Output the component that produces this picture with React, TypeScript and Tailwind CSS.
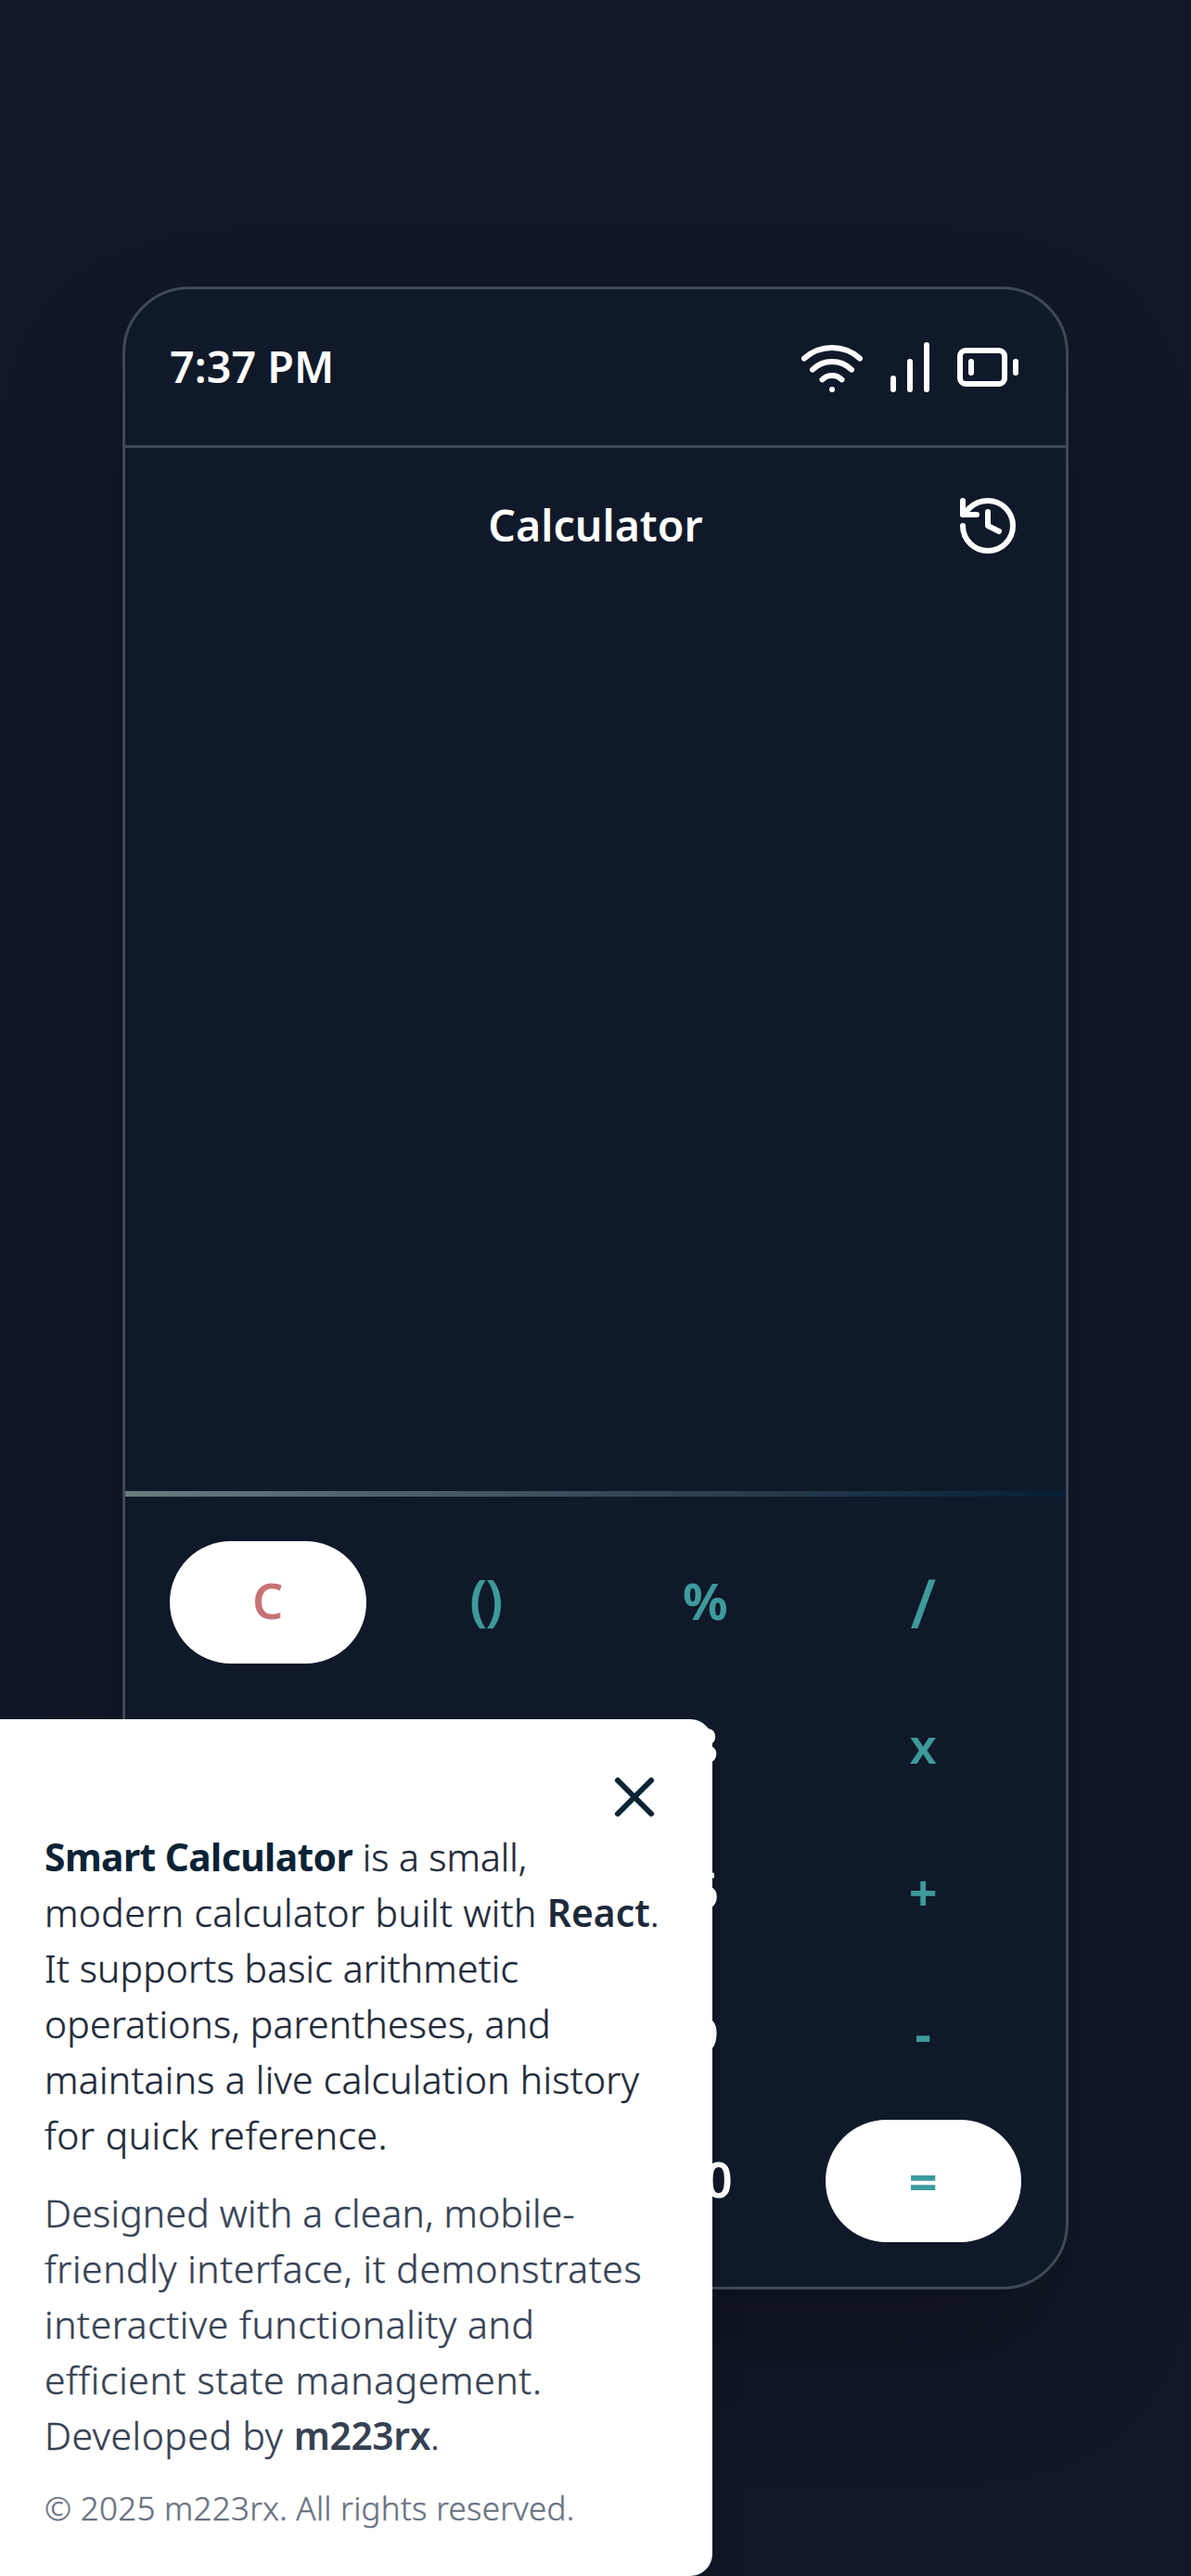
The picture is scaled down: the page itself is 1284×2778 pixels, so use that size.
import { BatteryLow, History, Wifi, X } from "lucide-react";

type Tone = "digit" | "operator" | "clear" | "equals";

const KEYS: { label: string; tone: Tone; glyph: string }[] = [
  { label: "C", tone: "clear", glyph: "pb-1 text-[52.4px] font-semibold" },
  { label: "()", tone: "operator", glyph: "pb-2 pr-0.5 text-[59px] leading-none font-semibold tracking-[-2px]" },
  { label: "%", tone: "operator", glyph: "pb-1 text-[54px] font-bold tracking-[-1px]" },
  { label: "/", tone: "operator", glyph: "pb-0 text-[72px] leading-none font-medium" },
  { label: "1", tone: "digit", glyph: "pb-1 text-[52.4px] font-semibold" },
  { label: "2", tone: "digit", glyph: "pb-1 text-[52.4px] font-semibold" },
  { label: "3", tone: "digit", glyph: "pb-1 text-[52.4px] font-semibold" },
  { label: "x", tone: "operator", glyph: "pb-1 text-[52.4px] font-semibold" },
  { label: "4", tone: "digit", glyph: "pb-1 text-[52.4px] font-semibold" },
  { label: "5", tone: "digit", glyph: "pb-1 text-[52.4px] font-semibold" },
  { label: "6", tone: "digit", glyph: "pb-1 text-[52.4px] font-semibold" },
  { label: "+", tone: "operator", glyph: "pb-0 text-[54px] font-bold" },
  { label: "7", tone: "digit", glyph: "pb-1 text-[52.4px] font-semibold" },
  { label: "8", tone: "digit", glyph: "pb-1 text-[52.4px] font-semibold" },
  { label: "9", tone: "digit", glyph: "pb-1 text-[52.4px] font-semibold" },
  { label: "-", tone: "operator", glyph: "pb-2 text-[54px] font-bold" },
  { label: ".", tone: "digit", glyph: "pb-1 text-[52.4px] font-semibold" },
  { label: "0", tone: "digit", glyph: "pb-1 text-[52.4px] font-semibold" },
  { label: "00", tone: "digit", glyph: "pb-1 text-[52.4px] font-semibold" },
  { label: "=", tone: "equals", glyph: "pb-0 text-[54px] font-bold" },
];

const TONES: Record<Tone, string> = {
  digit: "text-white",
  operator: "text-[#3d9a9c]",
  clear: "bg-white text-[#c87376]",
  equals: "bg-white text-[#3d9a9c]",
};

function SignalBars() {
  return (
    <svg className="size-[72px]" viewBox="0 0 24 24" fill="none" stroke="currentColor" strokeWidth="2" strokeLinecap="round">
      <path d="M6 20v-4M12 20V10M18 20V4" />
    </svg>
  );
}

function StatusBar() {
  return (
    <header className="flex items-center justify-between border-b-3 border-[#3f4954] p-12">
      <span className="-mt-0.5 text-[46.56px] leading-[70px] font-semibold tracking-[0.1px]">7:37 PM</span>
      <div className="flex gap-3">
        <Wifi className="size-[72px]" />
        <SignalBars />
        <BatteryLow className="size-[72px]" />
      </div>
    </header>
  );
}

function TitleBar() {
  return (
    <div className="grid grid-cols-[72px_1fr_72px] items-center px-12 pt-12">
      <span />
      <h1 className="-mt-0.5 text-center text-[46.56px] leading-[70px] font-semibold">Calculator</h1>
      <History className="size-[72px]" />
    </div>
  );
}

function Keypad() {
  return (
    <div className="grid grid-cols-4 gap-6 p-12">
      {KEYS.map((key) => (
        <button
          key={key.label}
          className={`flex h-[132px] items-center justify-center rounded-full ${key.glyph} ${TONES[key.tone]}`}
        >
          {key.label}
        </button>
      ))}
    </div>
  );
}

function AboutPanel() {
  return (
    <aside className="absolute bottom-0 left-0 h-[924px] w-[768px] rounded-r-[24px] bg-white p-12 text-[40.74px] leading-[60px] font-light whitespace-nowrap shadow-[0_30px_45px_-9px_rgba(0,0,0,0.1),0_12px_18px_-12px_rgba(0,0,0,0.1)] [-webkit-text-stroke:0.4px_currentColor]">
      <div className="flex h-[70px] justify-end">
        <X className="size-[72px] text-[#0a2335]" />
      </div>
      <p className="text-gray-800">
        <strong className="font-bold tracking-[-0.56px] text-[#0a2335] [-webkit-text-stroke:0px]">Smart Calculator</strong> is a small,
        <br />
        <span className="tracking-[0.45px]">modern calculator built with </span>
        <strong className="font-semibold [-webkit-text-stroke:0px]">React</strong>.<br />
        <span className="tracking-[0.22px]">It supports basic arithmetic</span>
        <br />
        <span className="tracking-[0.27px]">operations, parentheses, and</span>
        <br />
        <span className="tracking-[0.35px]">maintains a live calculation history</span>
        <br />
        <span className="tracking-[0.6px]">for quick reference.</span>
      </p>
      <p className="mt-6 text-[#364153]">
        <span className="tracking-[0.28px]">Designed with a clean, mobile-</span>
        <br />
        <span className="tracking-[0.64px]">friendly interface, it demonstrates</span>
        <br />
        <span className="tracking-[0.67px]">interactive functionality and</span>
        <br />
        <span className="tracking-[0.72px]">efficient state management.</span>
        <br />
        <span className="tracking-[0.6px]">Developed by </span>
        <strong className="font-semibold tracking-[-0.35px] [-webkit-text-stroke:0px]">m223rx</strong>.
      </p>
      <p className="mt-[25px] text-[34.92px] leading-[48px] tracking-[0.3px] text-gray-500">
        © 2025 m223rx. All rights reserved.
      </p>
    </aside>
  );
}

export default function App() {
  return (
    <div className="relative flex h-[2778px] w-[1284px] items-center justify-center overflow-hidden bg-[#111726] font-['Noto_Sans',sans-serif] text-white">
      <main className="flex h-[2160px] w-[1020px] flex-col rounded-[72px] border-3 border-[#3f4954] bg-[#101929] shadow-[0_75px_150px_-12px_rgba(0,0,0,0.24)]">
        <StatusBar />
        <TitleBar />
        <div className="flex-1" />
        <div className="h-1.5 bg-linear-to-r from-[#6a7b81] to-[#061f34]" />
        <Keypad />
      </main>
      <AboutPanel />
    </div>
  );
}
